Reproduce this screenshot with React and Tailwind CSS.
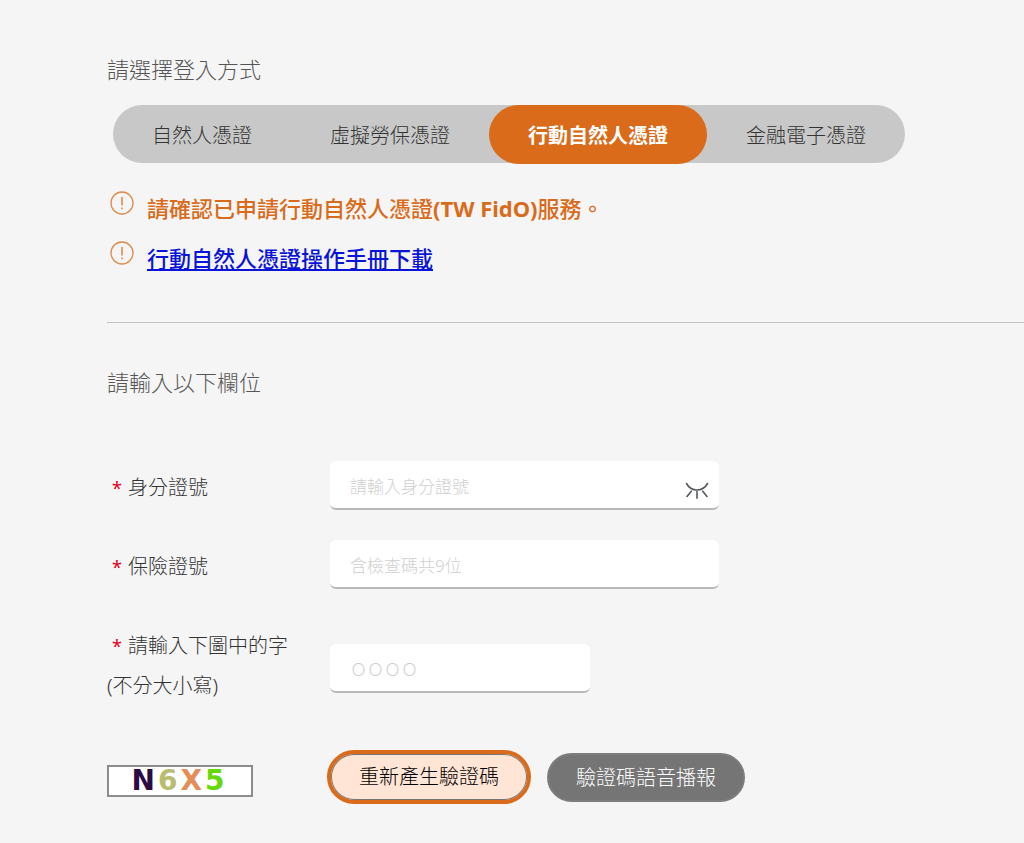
import React, { useState } from "react";

const tabs = ["自然人憑證", "虛擬勞保憑證", "行動自然人憑證", "金融電子憑證"];

const captcha = [
  { char: "N", color: "text-[#2b0a45]" },
  { char: "6", color: "text-[#b9bb6e]" },
  { char: "X", color: "text-[#e28e56]" },
  { char: "5", color: "text-[#66d80c]" },
];

const inputStyle =
  "block h-[49px] w-full rounded-md border-b-2 border-[#b8b8b8] bg-white px-5 pt-1 text-[17px] font-light text-[#444] placeholder:text-[#cfcfcf] focus:outline-none";

function NoticeIcon() {
  return (
    <svg className="mt-2 size-6 shrink-0" viewBox="0 0 24 24" fill="none" stroke="#e08a4c" aria-hidden="true">
      <circle cx="12" cy="12" r="11" strokeWidth="1.3" />
      <path d="M12 6v8.6" strokeWidth="1.6" />
      <path d="M12 16.4v1.8" strokeWidth="1.6" />
    </svg>
  );
}

function ClosedEyeIcon() {
  return (
    <svg className="h-[18px] w-6" viewBox="0 0 24 18" fill="none" stroke="#55585b" strokeWidth="1.6" strokeLinecap="round" aria-hidden="true">
      <path d="M1.5 1.5C4 6 7.500 8 12 8s8-2 10.500-6.500" />
      <path d="M6.300 9.200L2 14.500M12 9.500v6.800M17.700 9.200L22 14.500" />
    </svg>
  );
}

function Label({ htmlFor, children }) {
  return (
    <label htmlFor={htmlFor} className="w-[223px] shrink-0 pt-1 text-xl leading-10 font-light text-[#333]">
      <span className="pr-1.5 pl-[5px] text-lg font-normal text-[#e00020]">*</span>
      {children}
    </label>
  );
}

export default function App() {
  const [active, setActive] = useState(2);
  const [hidden, setHidden] = useState(true);

  return (
    <main className="min-h-screen bg-[#f5f5f5] pt-[52px] pb-[38px] pl-[107px] font-['Noto_Sans','Noto_Sans_CJK_TC',sans-serif]">
      <h2 className="text-[22px] leading-[34px] font-light text-[#555]">請選擇登入方式</h2>

      <div role="tablist" className="mt-[19px] ml-1.5 flex h-[58px] w-fit rounded-full bg-[#c8c8c8]">
        {tabs.map((tab, i) => (
          <button
            key={tab}
            type="button"
            role="tab"
            aria-selected={i === active}
            onClick={() => setActive(i)}
            className={
              i === active
                ? "h-[59px] rounded-full bg-[#d96b1a] px-[39px] pt-0.5 text-xl font-bold whitespace-nowrap text-white"
                : "h-[59px] rounded-full px-[39px] pt-0.5 text-xl font-light whitespace-nowrap text-[#333]"
            }
          >
            {tab}
          </button>
        ))}
      </div>

      <ul className="mt-5 text-[22px] leading-[50px]">
        <li className="flex gap-[13px] pl-[3px]">
          <NoticeIcon />
          <span className="font-medium text-[#d96b1a]">
            請確認已申請行動自然人憑證<span className="font-bold">(TW FidO)</span>服務。
          </span>
        </li>
        <li className="flex gap-[13px] pl-[3px]">
          <NoticeIcon />
          <a href="#manual" className="font-medium text-[#0a14d8] underline">
            行動自然人憑證操作手冊下載
          </a>
        </li>
      </ul>

      <hr className="mt-[39px] border-[#c4c4c4]" />

      <form onSubmit={(e) => e.preventDefault()}>
        <h2 className="mt-[42px] text-[22px] leading-[34px] font-light text-[#555]">請輸入以下欄位</h2>

        <div className="mt-[62px] flex items-center">
          <Label htmlFor="idno">身分證號</Label>
          <div className="relative w-[389px]">
            <input id="idno" type={hidden ? "password" : "text"} placeholder="請輸入身分證號" className={inputStyle} />
            <button
              type="button"
              aria-label="顯示身分證號"
              onClick={() => setHidden(!hidden)}
              className="absolute top-[21px] right-2.5"
            >
              <ClosedEyeIcon />
            </button>
          </div>
        </div>

        <div className="mt-[30px] flex items-center">
          <Label htmlFor="insno">保險證號</Label>
          <div className="w-[389px]">
            <input id="insno" type="text" placeholder="含檢查碼共9位" className={inputStyle} />
          </div>
        </div>

        <div className="mt-[33px] flex items-end">
          <Label htmlFor="code">
            請輸入下圖中的字
            <br />
            (不分大小寫)
          </Label>
          <div className="w-[260px] pb-[13px]">
            <input id="code" type="text" placeholder="ＯＯＯＯ" className={inputStyle} />
          </div>
        </div>

        <div className="mt-11 flex items-center">
          <div className="w-[220px] shrink-0 pt-2">
            <div className="flex h-8 w-[146px] items-center justify-center gap-[3px] border-2 border-[#8c8c8c] bg-white pr-1 font-['DejaVu_Sans',sans-serif] text-[28px] leading-7 font-bold">
              {captcha.map(({ char, color }) => (
                <span key={char} className={color}>
                  {char}
                </span>
              ))}
            </div>
          </div>
          <button
            type="button"
            className="rounded-full border-4 border-[#d96b1a] bg-[#ffe5d5] px-7 py-2 text-xl leading-[30px] font-light text-black inset-ring inset-ring-[#767676]"
          >
            重新產生驗證碼
          </button>
          <button
            type="button"
            className="ml-4 rounded-full border-2 border-[#7d7d7d] bg-[#757575] px-[27px] py-1 text-xl leading-[37px] font-light text-white"
          >
            驗證碼語音播報
          </button>
        </div>
      </form>
    </main>
  );
}
